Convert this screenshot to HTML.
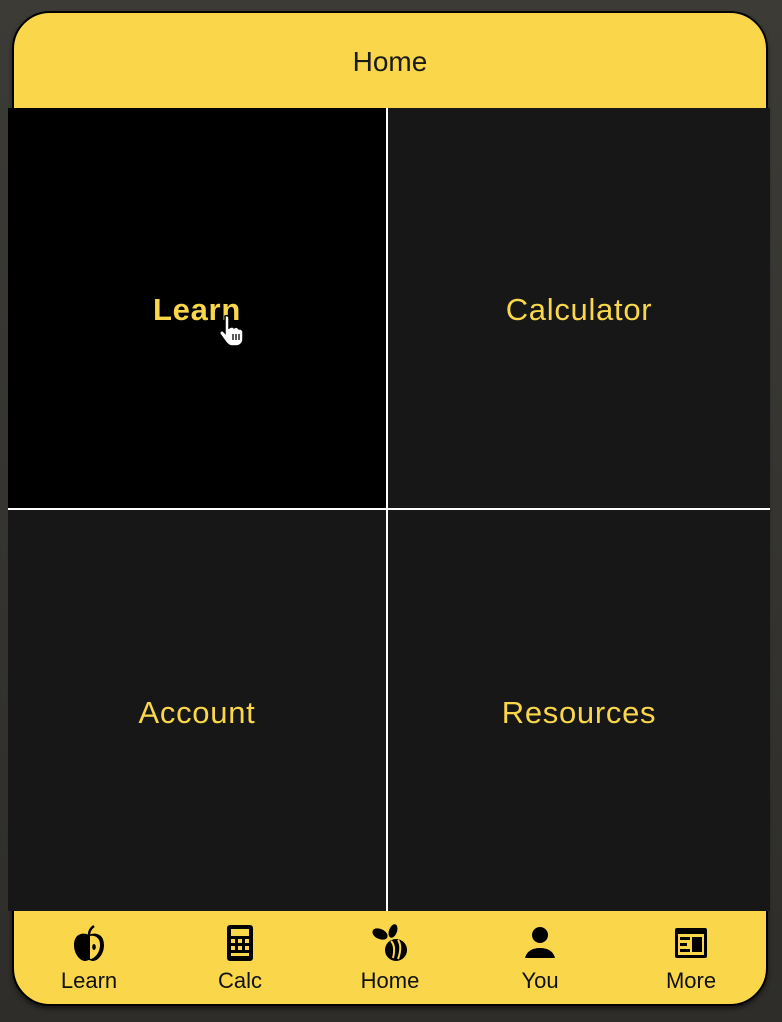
<!DOCTYPE html>
<html><head><meta charset="utf-8"><style>
*{margin:0;padding:0;box-sizing:border-box}
body{width:782px;height:1022px;background:linear-gradient(#3c3b36,#2e2d2a);position:relative;overflow:hidden;font-family:"Liberation Sans",sans-serif}
.dev{position:absolute;left:12px;top:11px;width:756px;height:995px;border:2px solid #000;border-radius:38px;background:#f9d64a;overflow:hidden;box-shadow:0 3px 4px rgba(0,0,0,.5)}
.hdr{position:absolute;left:0;top:0;width:100%;height:96px;text-align:center;line-height:98px;font-size:28px;color:#1a1a1a}
.grid{position:absolute;left:8px;top:108px;width:762px;height:803px;background:#fff}
.c{position:absolute;background:#171717;color:#f9d64a;font-size:31px;display:flex;align-items:center;justify-content:center;letter-spacing:.7px;padding-top:4px}
.nav{position:absolute;top:924px;width:110px;text-align:center;font-size:22px;color:#111;line-height:26px}
.nav svg{display:block;margin:0 auto 6px;height:38px;width:38px}
</style></head><body>
<div class="dev"><div class="hdr">Home</div></div>
<div class="grid">
<div class="c" style="left:0;top:0;width:378px;height:400px;background:#000;font-weight:bold">Learn</div>
<div class="c" style="left:380px;top:0;width:382px;height:400px">Calculator</div>
<div class="c" style="left:0;top:402px;width:378px;height:401px">Account</div>
<div class="c" style="left:380px;top:402px;width:382px;height:401px">Resources</div>
</div>
<svg style="position:absolute;left:220px;top:314px" width="26" height="32" viewBox="0 0 26 32"><path d="M5 2c2-1 4 0 4 2v10l2-1 2 0 1 1 2-1 2 1 1 1 2 0 2 2v8c0 4-3 7-7 7h-4c-3 0-5-2-7-5l-5-7c-1-2 1-4 3-3l2 2V4z" fill="#fff" stroke="#000" stroke-width="1.5"/><path d="M13 20v6M16 20v6M19 20v6" stroke="#000" stroke-width="1.3"/></svg>
<div class="nav" style="left:34px"><svg viewBox="0 0 38 38"><path d="M19 11c-5-3-15-2-15 10 0 9 6 16 11 16 2 0 3-1 4-1s2 1 4 1c5 0 11-7 11-16 0-12-10-13-15-10z" fill="#000"/><path d="M20 12v23c4 0 10-6 10-14 0-8-6-10-10-9z" fill="#f9d64a"/><ellipse cx="24" cy="23" rx="1.8" ry="3" fill="#000"/><path d="M19 11c0-4 2-7 5-9" stroke="#000" stroke-width="2.5" fill="none"/></svg>Learn</div>
<div class="nav" style="left:185px"><svg viewBox="0 0 38 38"><rect x="6" y="1" width="26" height="36" rx="3" fill="#000"/><rect x="10" y="5" width="18" height="7" fill="#f9d64a"/><g fill="#f9d64a"><rect x="10" y="15" width="4" height="4"/><rect x="17" y="15" width="4" height="4"/><rect x="24" y="15" width="4" height="4"/><rect x="10" y="22" width="4" height="4"/><rect x="17" y="22" width="4" height="4"/><rect x="24" y="22" width="4" height="4"/><rect x="10" y="29" width="18" height="3"/></g></svg>Calc</div>
<div class="nav" style="left:335px"><svg viewBox="0 0 38 38"><ellipse cx="9" cy="10" rx="8" ry="5" transform="rotate(25 9 10)" fill="#000"/><ellipse cx="22" cy="7" rx="4" ry="7" transform="rotate(20 22 7)" fill="#000"/><circle cx="25" cy="26" r="11" fill="#000"/><path d="M20 17c3 3 4 9 2 17M27 16c3 4 3 11 0 19" stroke="#f9d64a" stroke-width="2" fill="none"/></svg>Home</div>
<div class="nav" style="left:485px"><svg viewBox="0 0 38 38"><circle cx="19" cy="11" r="8" fill="#000"/><path d="M4 34c2-8 9-10 15-10s13 2 15 10z" fill="#000"/></svg>You</div>
<div class="nav" style="left:636px"><svg viewBox="0 0 38 38"><rect x="3" y="4" width="32" height="30" rx="2" fill="#000"/><rect x="6" y="10" width="26" height="21" fill="#f9d64a"/><rect x="20" y="13" width="10" height="15" fill="#000"/><rect x="8" y="13" width="10" height="3" fill="#000"/><rect x="8" y="19" width="7" height="3" fill="#000"/><rect x="8" y="25" width="10" height="3" fill="#000"/></svg>More</div>
</body></html>
